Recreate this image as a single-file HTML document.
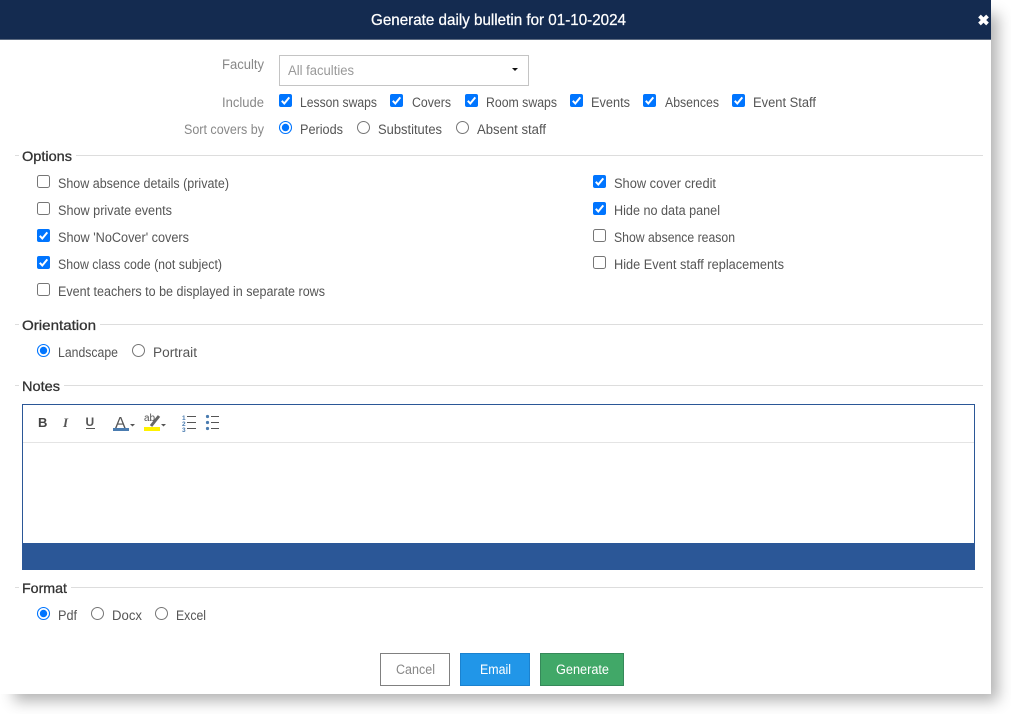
<!DOCTYPE html>
<html><head><meta charset="utf-8"><title>Generate daily bulletin</title>
<style>
html,body{margin:0;padding:0;background:#fff;width:1011px;height:714px;overflow:hidden}
svg{display:block;position:absolute;left:0;top:0}
#s{position:absolute;left:7px;top:7px;width:984px;height:687px;box-shadow:7px 7px 14px rgba(0,0,0,.3)}
#d{position:absolute;left:0;top:0;width:991px;height:694px;background:#fff}
text{font-family:"Liberation Sans",sans-serif;font-size:13.5px;fill:#555}
.l{fill:#888}
.h{fill:#333;font-size:14px;stroke:#333;stroke-width:.3px}
.c{fill:#0075ff}
.u{fill:#fff;stroke:#767676;stroke-width:1}
.t{fill:none;stroke:#fff;stroke-width:2}
.r{stroke:#ddd;stroke-width:1}
</style></head><body>
<div id="s"></div>
<div id="d"></div>
<svg width="1011" height="714" viewBox="0 0 1011 714">
<defs>
<g id="ck"><rect width="13" height="13" rx="2" class="c"/><path d="M2.8 6.8 5.3 9.5 10.3 3.4" class="t"/></g>
<g id="un"><rect x=".5" y=".5" width="12" height="12" rx="2" class="u"/></g>
<g id="ro"><circle r="6" fill="#fff" stroke="#0075ff" stroke-width="1.1"/><circle r="3.7" fill="#0075ff"/></g>
<g id="rn"><circle r="6" fill="#fff" stroke="#767676" stroke-width="1"/></g>
</defs>
<rect x="0" y="0" width="991" height="39" fill="#142b50"/>
<rect x="0" y="39" width="991" height="1" fill="#5c6a80"/>
<text x="371" y="25" textLength="255" lengthAdjust="spacingAndGlyphs" style="fill:#fff;stroke:#fff;stroke-width:.25px;font-size:16px">Generate daily bulletin for 01-10-2024</text>
<path d="M979.500 16 987.500 24M987.500 16 979.500 24" stroke="#fff" stroke-width="3.8" fill="none"/>

<text class="l" x="222" y="69" textLength="42" lengthAdjust="spacingAndGlyphs">Faculty</text>
<rect x="279.500" y="55.500" width="249" height="30" fill="#fff" stroke="#c4c4c4"/>
<text x="288" y="75" textLength="66" lengthAdjust="spacingAndGlyphs" style="fill:#999">All faculties</text>
<path d="M512 68h6l-3 3z" fill="#111"/>

<text class="l" x="222" y="107" textLength="42" lengthAdjust="spacingAndGlyphs">Include</text>
<use href="#ck" x="279" y="94"/><text x="300" y="107" textLength="77" lengthAdjust="spacingAndGlyphs">Lesson swaps</text>
<use href="#ck" x="390" y="94"/><text x="412" y="107" textLength="39" lengthAdjust="spacingAndGlyphs">Covers</text>
<use href="#ck" x="465" y="94"/><text x="486" y="107" textLength="71" lengthAdjust="spacingAndGlyphs">Room swaps</text>
<use href="#ck" x="570" y="94"/><text x="591" y="107" textLength="39" lengthAdjust="spacingAndGlyphs">Events</text>
<use href="#ck" x="643" y="94"/><text x="665" y="107" textLength="54" lengthAdjust="spacingAndGlyphs">Absences</text>
<use href="#ck" x="732" y="94"/><text x="753" y="107" textLength="63" lengthAdjust="spacingAndGlyphs">Event Staff</text>

<text class="l" x="184" y="134" textLength="80" lengthAdjust="spacingAndGlyphs">Sort covers by</text>
<use href="#ro" x="285.500" y="127.500"/><text x="300" y="134" textLength="43" lengthAdjust="spacingAndGlyphs">Periods</text>
<use href="#rn" x="363.500" y="127.500"/><text x="378" y="134" textLength="64" lengthAdjust="spacingAndGlyphs">Substitutes</text>
<use href="#rn" x="462.500" y="127.500"/><text x="477" y="134" textLength="69" lengthAdjust="spacingAndGlyphs">Absent staff</text>

<path class="r" d="M15 155.500h4M76 155.500H983M15 324.500h4M100 324.500H983M15 385.500h4M64 385.500H983M15 587.500h4M71 587.500H983"/>
<text class="h" x="22" y="161" textLength="50" lengthAdjust="spacingAndGlyphs">Options</text>
<use href="#un" x="37" y="175"/><text x="58" y="188" textLength="171" lengthAdjust="spacingAndGlyphs">Show absence details (private)</text>
<use href="#un" x="37" y="202"/><text x="58" y="215" textLength="114" lengthAdjust="spacingAndGlyphs">Show private events</text>
<use href="#ck" x="37" y="229"/><text x="58" y="242" textLength="131" lengthAdjust="spacingAndGlyphs">Show 'NoCover' covers</text>
<use href="#ck" x="37" y="256"/><text x="58" y="269" textLength="164" lengthAdjust="spacingAndGlyphs">Show class code (not subject)</text>
<use href="#un" x="37" y="283"/><text x="58" y="296" textLength="267" lengthAdjust="spacingAndGlyphs">Event teachers to be displayed in separate rows</text>
<use href="#ck" x="593" y="175"/><text x="614" y="188" textLength="102" lengthAdjust="spacingAndGlyphs">Show cover credit</text>
<use href="#ck" x="593" y="202"/><text x="614" y="215" textLength="106" lengthAdjust="spacingAndGlyphs">Hide no data panel</text>
<use href="#un" x="593" y="229"/><text x="614" y="242" textLength="121" lengthAdjust="spacingAndGlyphs">Show absence reason</text>
<use href="#un" x="593" y="256"/><text x="614" y="269" textLength="170" lengthAdjust="spacingAndGlyphs">Hide Event staff replacements</text>

<text class="h" x="22" y="330" textLength="74" lengthAdjust="spacingAndGlyphs">Orientation</text>
<use href="#ro" x="43.500" y="350.500"/><text x="58" y="357" textLength="60" lengthAdjust="spacingAndGlyphs">Landscape</text>
<use href="#rn" x="138.500" y="350.500"/><text x="153" y="357" textLength="44" lengthAdjust="spacingAndGlyphs">Portrait</text>

<text class="h" x="22" y="391" textLength="38" lengthAdjust="spacingAndGlyphs">Notes</text>
<rect x="22.500" y="404.500" width="952" height="165" fill="#fff" stroke="#2b5797"/>
<rect x="23" y="442" width="951" height="1" fill="#e4e4e4"/>
<rect x="22" y="543" width="953" height="27" fill="#2b5797"/>
<text x="38" y="427" style="font-size:13px;font-weight:bold;fill:#444">B</text>
<text x="63" y="427" style="font-size:13px;font-style:italic;font-family:'Liberation Serif',serif;font-weight:bold;fill:#555">I</text>
<text x="85.500" y="426" style="font-size:12px;font-weight:bold;fill:#555">U</text>
<rect x="86" y="428" width="9" height="1" fill="#555"/>
<text x="115" y="428" style="font-size:16px;fill:#555">A</text>
<rect x="113" y="428" width="16" height="3" fill="#4a7cb0"/>
<path d="M130 424h5l-2.500 2.500z" fill="#555"/>
<text x="144" y="421" style="font-size:10px;fill:#555">ab</text>
<path d="M151 426 159 416" stroke="#666" stroke-width="3" fill="none"/>
<rect x="144" y="427" width="16" height="4" fill="#fff200"/>
<path d="M161 424h5l-2.500 2.500z" fill="#555"/>
<text x="182" y="420" style="font-size:6.500px;font-weight:bold;fill:#4a7cb0">1</text>
<text x="182" y="426" style="font-size:6.500px;font-weight:bold;fill:#4a7cb0">2</text>
<text x="182" y="432" style="font-size:6.500px;font-weight:bold;fill:#4a7cb0">3</text>
<path d="M187 416.500h9M187 422.500h9M187 428.500h9" stroke="#555" stroke-width="1"/>
<circle cx="207.500" cy="416.500" r="1.600" fill="#4a7cb0"/><circle cx="207.500" cy="422.500" r="1.600" fill="#4a7cb0"/><circle cx="207.500" cy="428.500" r="1.600" fill="#4a7cb0"/>
<path d="M211 416.500h8M211 422.500h8M211 428.500h8" stroke="#555" stroke-width="1"/>

<text class="h" x="22" y="593" textLength="45" lengthAdjust="spacingAndGlyphs">Format</text>
<use href="#ro" x="43.500" y="613.500"/><text x="58" y="620" textLength="19" lengthAdjust="spacingAndGlyphs">Pdf</text>
<use href="#rn" x="97.500" y="613.500"/><text x="112" y="620" textLength="30" lengthAdjust="spacingAndGlyphs">Docx</text>
<use href="#rn" x="161.500" y="613.500"/><text x="176" y="620" textLength="30" lengthAdjust="spacingAndGlyphs">Excel</text>

<rect x="380.500" y="653.500" width="69" height="32" fill="#fff" stroke="#808080"/>
<text x="396" y="674" textLength="39" lengthAdjust="spacingAndGlyphs" style="fill:#888">Cancel</text>
<rect x="460.500" y="653.500" width="69" height="32" fill="#2196e8" stroke="#1b82cf"/>
<text x="480" y="674" textLength="31" lengthAdjust="spacingAndGlyphs" style="fill:#fff">Email</text>
<rect x="540.500" y="653.500" width="83" height="32" fill="#41a868" stroke="#36895a"/>
<text x="556" y="674" textLength="53" lengthAdjust="spacingAndGlyphs" style="fill:#fff">Generate</text>
</svg>
</body></html>
